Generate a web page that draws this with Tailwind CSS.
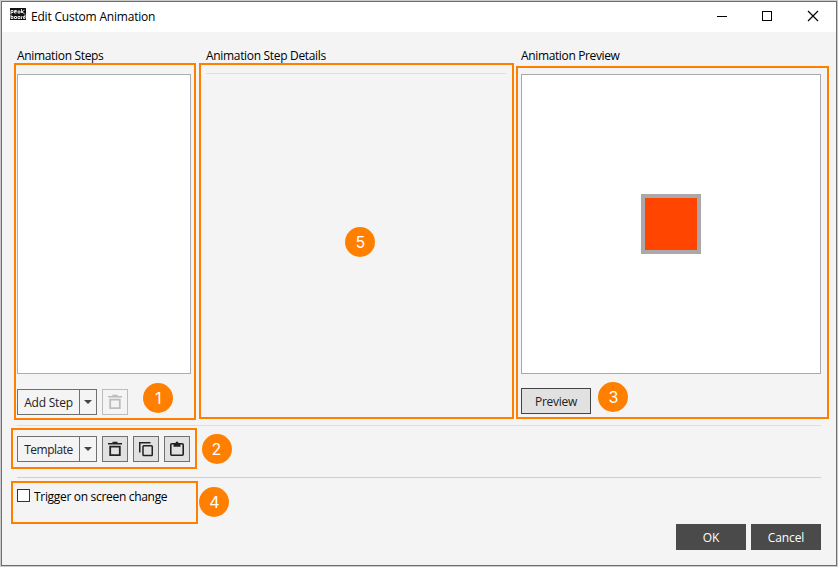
<!DOCTYPE html>
<html lang="en">
<head>
<meta charset="utf-8">
<title>Edit Custom Animation</title>
<script src="https://cdn.jsdelivr.net/npm/@tailwindcss/browser@4"></script>
</head>
<body class="relative h-[567px] w-[838px] overflow-hidden bg-[#cbcbcb] p-px font-['Open_Sans','Noto_Sans',sans-serif] text-[12px] leading-4 text-black">
<div class="flex h-[565px] w-[836px] flex-col border border-[#6e6e6e] bg-[#f4f4f4]">
  <header class="flex h-[30px] shrink-0 items-center bg-white pl-2">
    <svg class="-mt-[6px] h-[12px] w-4" viewBox="0 0 16 12" aria-hidden="true">
      <rect width="16" height="12" fill="#111"/>
      <g fill="none" stroke="#e4e4e4" stroke-width="1"><path d="M1 6V2.500h2v2H1M4.500 3.500h2v-1h-2v2.500h2M8 3h2v2H8zM11.500 1v4M14.500 2l-3 2 3 1.500M1 6.500v4h2v-2H1M4.500 8.500h2v2h-2zM8 8.500h2v2H8zM11.500 11V8.500h1M15 6.500v4h-1.500v-2H15"/></g>
    </svg>
    <h1 class="ml-[5px] w-[130px] whitespace-nowrap tracking-[-0.2px]">Edit Custom Animation</h1>
    <div class="ml-auto flex items-center">
      <svg class="h-[30px] w-[46px]" viewBox="0 0 46 30" stroke="#000" fill="none"><path d="M19 14.500h10"/></svg>
      <svg class="h-[30px] w-[46px]" viewBox="0 0 46 30" stroke="#000" fill="none"><rect x="18.500" y="9.500" width="9" height="9"/></svg>
      <svg class="h-[30px] w-[46px]" viewBox="0 0 46 30" stroke="#000" stroke-width="1.200" fill="none"><path d="M18 9l10 10M28 9l-10 10"/></svg>
    </div>
  </header>
  <main class="flex h-[393px] shrink-0 pl-[15px] pr-[14px] pt-4">
    <section class="w-[174px]">
      <h2 class="h-[26px] whitespace-nowrap tracking-[-0.33px]">Animation Steps</h2>
      <div class="h-[300px] border border-[#abadb3] bg-white"></div>
      <div class="mt-[15px] flex gap-[5px]">
        <button class="flex h-[26px] w-[80px] border border-[#707070] text-[#222]"><span class="flex h-full w-[61px] items-center justify-center whitespace-nowrap pt-px tracking-[-0.2px]">Add Step</span><span class="flex h-full w-[17px] items-center justify-center border-l border-[#707070]"><svg class="h-1 w-2" viewBox="0 0 8 4"><path d="M0 0h8L4 4z" fill="#444"/></svg></span></button>
        <button class="flex size-[26px] items-center justify-center border border-[#bcbcbc] text-[#bcbcbc]"><svg class="h-4 w-[14px]" viewBox="0 0 14 16" fill="none" stroke="currentColor"><path d="M0 2.750h14M4.500 1.500h5" stroke-width="1.500"/><path d="M2.200 5.700h9.600v8.400H2.200z" stroke-width="1.800"/></svg></button>
      </div>
    </section>
    <section class="ml-[15px] w-[300px]">
      <h2 class="h-[25px] whitespace-nowrap tracking-[-0.32px]">Animation Step Details</h2>
      <div class="h-px bg-[#e0e0e0]"></div>
    </section>
    <section class="ml-[15px] w-[300px]">
      <h2 class="h-[26px] whitespace-nowrap tracking-[-0.36px]">Animation Preview</h2>
      <div class="flex h-[300px] items-center justify-center border border-[#a9a9a9] bg-white"><div class="size-[60px] border-4 border-[#a9a9a9] bg-[#ff4500]"></div></div>
      <button class="mt-[14px] flex h-[26px] w-[70px] items-center justify-center border border-[#444] bg-[#e1e1e1] pt-px tracking-[-0.3px] text-[#222]">Preview</button>
    </section>
  </main>
  <hr class="ml-[15px] h-px w-[804px] shrink-0 border-0 bg-[#dedede]">
  <div class="ml-[15px] mt-[10px] flex h-[41px] w-[804px] shrink-0 gap-[5px]">
    <button class="flex h-[26px] w-[80px] border border-[#707070] text-[#222]"><span class="flex h-full w-[61px] items-center justify-center whitespace-nowrap pt-px tracking-[-0.5px]">Template</span><span class="flex h-full w-[17px] items-center justify-center border-l border-[#707070]"><svg class="h-1 w-2" viewBox="0 0 8 4"><path d="M0 0h8L4 4z" fill="#444"/></svg></span></button>
    <button class="flex size-[26px] items-center justify-center border border-[#707070] bg-[#e1e1e1] text-[#222]"><svg class="h-4 w-[14px]" viewBox="0 0 14 16" fill="none" stroke="currentColor"><path d="M0 2.750h14M4.500 1.500h5" stroke-width="1.500"/><path d="M2.200 5.700h9.600v8.400H2.200z" stroke-width="1.800"/></svg></button>
    <button class="flex size-[26px] items-center justify-center border border-[#707070] bg-[#e1e1e1] text-[#222]"><svg class="h-4 w-[14px]" viewBox="0 0 14 16" fill="none" stroke="currentColor" stroke-width="1.500"><path d="M.75 11.500V1.750H11.500"/><rect x="4" y="4.750" width="9.250" height="9.750" rx=".8"/></svg></button>
    <button class="flex size-[26px] items-center justify-center border border-[#707070] bg-[#e1e1e1] text-[#222]"><svg class="h-4 w-[14px]" viewBox="0 0 14 16" fill="none" stroke="currentColor" stroke-width="1.600"><rect x=".8" y="2.800" width="12.400" height="11.400" rx=".9"/><path d="M3.500 2h2a1.500 1.500 0 0 1 3 0h2v3.700h-7z" fill="currentColor" stroke="none"/></svg></button>
  </div>
  <hr class="ml-[15px] h-px w-[804px] shrink-0 border-0 bg-[#cfcfcf]">
  <label class="ml-[15px] mt-[11px] flex h-[16px] items-start"><span class="size-[13px] border border-[#333] bg-white"></span><span class="ml-1 whitespace-nowrap tracking-[-0.31px]">Trigger on screen change</span></label>
  <footer class="mr-[15px] mt-[19px] flex justify-end gap-[5px] text-white">
    <button class="h-[26px] w-[70px] bg-[#4a4a4a] pt-px">OK</button>
    <button class="h-[26px] w-[70px] bg-[#4a4a4a] pt-px tracking-[-0.1px]">Cancel</button>
  </footer>
</div>
<!-- Numbered callouts over the dialog -->
<div class="pointer-events-none absolute inset-0 font-['Inter',sans-serif] text-[16px] leading-none text-white">
  <div class="absolute left-[14px] top-[63px] h-[357px] w-[182px] border-2 border-[#ff8000]"></div>
  <div class="absolute left-[199px] top-[63px] h-[356px] w-[315px] border-2 border-[#ff8000]"></div>
  <div class="absolute left-[516px] top-[66px] h-[353px] w-[313px] border-2 border-[#ff8000]"></div>
  <div class="absolute left-[11px] top-[428px] h-[41px] w-[186px] border-2 border-[#ff8000]"></div>
  <div class="absolute left-[11px] top-[481px] h-[43px] w-[187px] border-2 border-[#ff8000]"></div>
  <div class="absolute left-[143.300px] top-[383.300px] flex size-[30px] items-center justify-center rounded-full bg-[#ff8000] pb-px">1</div>
  <div class="absolute left-[201.500px] top-[434.300px] flex size-[30px] items-center justify-center rounded-full bg-[#ff8000] pb-px">2</div>
  <div class="absolute left-[598.400px] top-[382.300px] flex size-[30px] items-center justify-center rounded-full bg-[#ff8000] pb-px">3</div>
  <div class="absolute left-[199.400px] top-[487.300px] flex size-[30px] items-center justify-center rounded-full bg-[#ff8000] pb-px">4</div>
  <div class="absolute left-[345.300px] top-[227.300px] flex size-[30px] items-center justify-center rounded-full bg-[#ff8000] pb-px">5</div>
</div>
</body>
</html>
